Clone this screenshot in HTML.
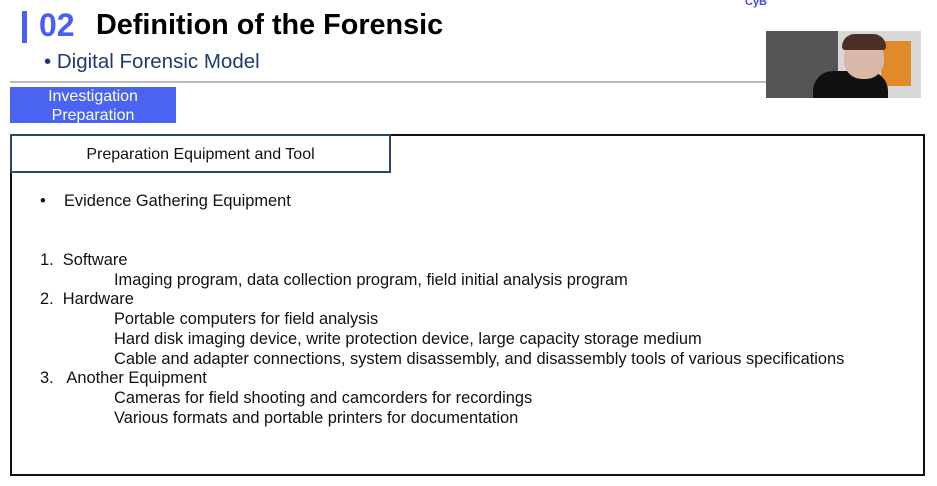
<!DOCTYPE html><html><head><style>
body{margin:0;width:937px;height:486px;background:#fff;position:relative;overflow:hidden;font-family:"Liberation Sans",sans-serif}
.a{position:absolute;white-space:nowrap}
.t{font-size:16.4px;color:#111}
</style></head><body>
<div class="a" style="left:22px;top:11px;width:5px;height:32px;background:#4a5ff0"></div>
<div class="a" style="left:39px;top:7px;font-size:32px;font-weight:bold;color:#4a5ff0">02</div>
<div class="a" style="left:96px;top:9px;font-size:28.8px;font-weight:bold;color:#000">Definition of the Forensic</div>
<div class="a" style="left:44px;top:50px;font-size:20.5px;color:#1f3a6e">• Digital Forensic Model</div>
<div class="a" style="left:10px;top:81px;width:757px;height:2px;background:#bbb"></div>
<div class="a" style="left:10px;top:87px;width:166px;height:36px;background:#4a63f0;color:#fff;font-size:16px;text-align:center;line-height:19px">Investigation<br>Preparation</div>
<div class="a" style="left:10px;top:134px;width:911px;height:338px;border:2px solid #111"></div>
<div class="a" style="left:10px;top:134px;width:377px;height:35px;border:2px solid #2e4470;background:#fff;font-size:16px;line-height:38px;text-align:center;color:#111">Preparation Equipment and Tool</div>
<div class="a t" style="left:40px;top:192px">•&nbsp;&nbsp;&nbsp;&nbsp;Evidence Gathering Equipment</div>
<div class="a t" style="left:40px;top:251px;line-height:19.7px">1.&nbsp; Software<br>&nbsp;<br>2.&nbsp; Hardware<br>&nbsp;<br>&nbsp;<br>&nbsp;<br>3.&nbsp;&nbsp; Another Equipment</div>
<div class="a t" style="left:114px;top:271px;line-height:19.7px">Imaging program, data collection program, field initial analysis program<br>&nbsp;<br>Portable computers for field analysis<br>Hard disk imaging device, write protection device, large capacity storage medium<br>Cable and adapter connections, system disassembly, and disassembly tools of various specifications<br>&nbsp;<br>Cameras for field shooting and camcorders for recordings<br>Various formats and portable printers for documentation</div>
<div class="a" style="left:745px;top:-4px;font-size:11px;font-weight:bold;color:#3a4fd8">CyB</div>
<div class="a" style="left:766px;top:31px;width:155px;height:67px;background:#d8d8d8;overflow:hidden">
 <div class="a" style="left:0;top:0;width:72px;height:67px;background:#555"></div>
 <div class="a" style="left:115px;top:10px;width:30px;height:45px;background:#e08a2a"></div>
 <div class="a" style="left:48px;top:58px;width:30px;height:10px;background:#e8e0d0"></div>
 <div class="a" style="left:47px;top:40px;width:75px;height:35px;background:#111;border-radius:20px 20px 0 0"></div>
 <div class="a" style="left:78px;top:8px;width:40px;height:40px;background:#d9b8a8;border-radius:45%"></div>
 <div class="a" style="left:76px;top:3px;width:44px;height:16px;background:#4a3028;border-radius:20px 20px 5px 5px"></div>
</div>
</body></html>
